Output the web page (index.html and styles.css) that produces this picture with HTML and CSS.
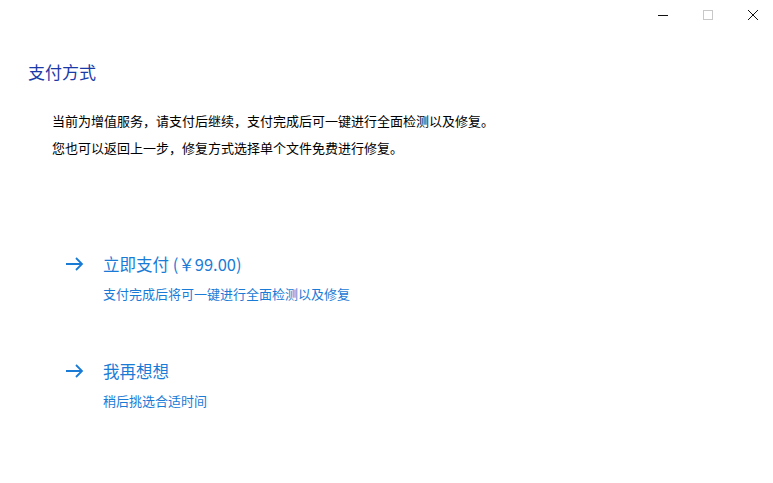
FILE: index.html
```html
<!DOCTYPE html>
<html lang="zh-CN">
<head>
    <meta charset="UTF-8">
    <title>支付方式</title>
    <link rel="stylesheet" href="styles.css">
</head>
<body>
    <div class="titlebar">
        <div class="win-btn">
            <svg width="10" height="10" viewBox="0 0 10 10"><path d="M0 5.5H10" stroke="#111" stroke-width="1"/></svg>
        </div>
        <div class="win-btn">
            <svg width="10" height="10" viewBox="0 0 10 10"><rect x="0.5" y="0.5" width="9" height="9" fill="none" stroke="#c8c8c8" stroke-width="1"/></svg>
        </div>
        <div class="win-btn">
            <svg width="10" height="10" viewBox="0 0 10 10"><path d="M0 0L10 10M10 0L0 10" stroke="#111" stroke-width="1"/></svg>
        </div>
    </div>

    <div class="page">
        <h1 class="page-title">支付方式</h1>
        <div class="desc">
            <p>当前为增值服务，请支付后继续，支付完成后可一键进行全面检测以及修复。</p>
            <p>您也可以返回上一步，修复方式选择单个文件免费进行修复。</p>
        </div>

        <div class="option option-first">
            <div class="arrow">
                <svg width="18" height="14" viewBox="0 0 18 14"><path d="M0 7H16M10 1L16 7L10 13" fill="none" stroke="#1a7bd6" stroke-width="1.8"/></svg>
            </div>
            <div class="option-body">
                <div class="option-title">立即支付 (￥99.00)</div>
                <div class="option-sub">支付完成后将可一键进行全面检测以及修复</div>
            </div>
        </div>

        <div class="option">
            <div class="arrow">
                <svg width="18" height="14" viewBox="0 0 18 14"><path d="M0 7H16M10 1L16 7L10 13" fill="none" stroke="#1a7bd6" stroke-width="1.8"/></svg>
            </div>
            <div class="option-body">
                <div class="option-title">我再想想</div>
                <div class="option-sub">稍后挑选合适时间</div>
            </div>
        </div>
    </div>
</body>
</html>
```

FILE: styles.css
```css
body {
    margin: 0;
    background: #fff;
    font-family: "Noto Sans CJK SC", "Noto Sans", sans-serif;
    color: #000;
    overflow: hidden;
}

.titlebar {
    display: flex;
    justify-content: flex-end;
    height: 30px;
    margin-right: -2px;
}

.win-btn {
    width: 45px;
    height: 30px;
    display: flex;
    align-items: center;
    justify-content: center;
}

.page {
    padding-left: 28px;
}

.page-title {
    margin: 30px 0 0;
    font-size: 17px;
    font-weight: normal;
    line-height: 24px;
    color: #1a3aa8;
}

.desc {
    margin-top: 23px;
    padding-left: 24px;
}

.desc p {
    margin: 0;
    font-size: 13px;
    line-height: 27px;
}

.option {
    display: flex;
    padding-left: 38px;
    margin-top: 55px;
    color: #1a7bd6;
}

.option-first {
    margin-top: 91px;
}

.arrow {
    width: 37px;
    height: 24px;
    display: flex;
    align-items: center;
}

.option-title {
    font-size: 16.5px;
    line-height: 24px;
}

.option-sub {
    margin-top: 8px;
    font-size: 13px;
    line-height: 20px;
}
```
